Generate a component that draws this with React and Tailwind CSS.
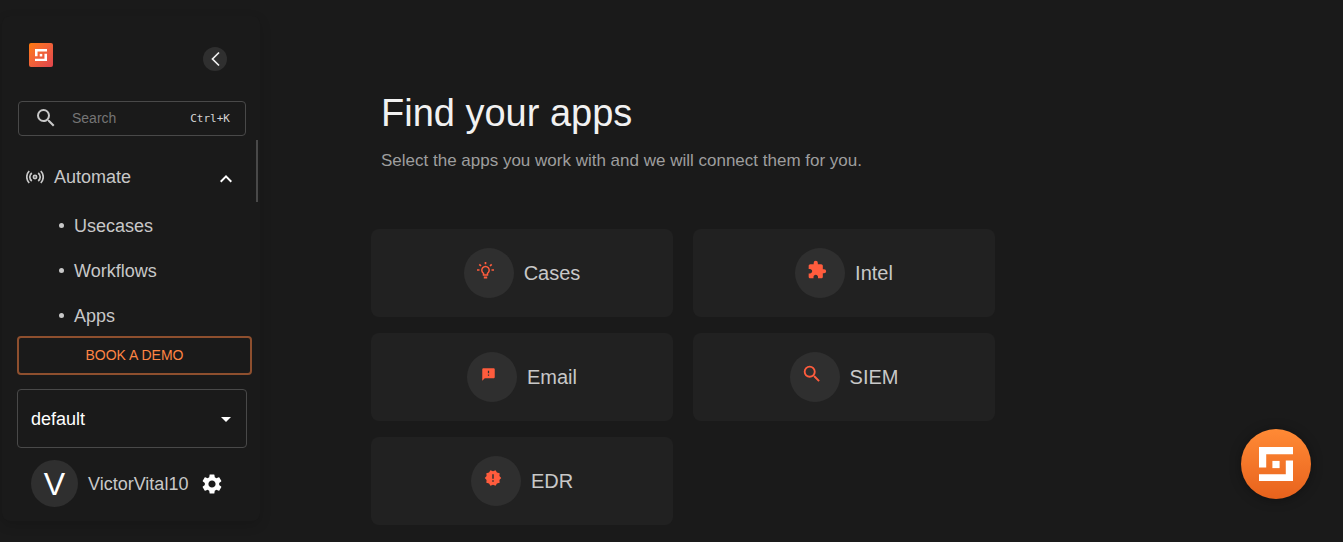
import React from "react";
import {
  MdSearch,
  MdSettings,
  MdExtension,
  MdSmsFailed,
  MdNewReleases,
  MdExpandLess,
  MdArrowDropDown,
} from "react-icons/md";

function Mark({ className }) {
  return (
    <svg viewBox="0 0 33 33" className={className} fill="#fff" aria-hidden="true">
      <path d="M0 0H33V7H7V20H0Z" />
      <path d="M33 33H0V26.500H26V13H33Z" />
      <path d="M13 13.500H20V20.500H13Z" />
    </svg>
  );
}

function BulbIcon({ className }) {
  return (
    <svg viewBox="0 0 17 17" className={className} fill="none" stroke="currentColor" strokeWidth="1.500" aria-hidden="true">
      <path d="M6.500 13V11.300A3.700 3.700 0 1 1 10.500 11.300V13Z" />
      <path d="M6.800 15.500H10.200" strokeWidth="2" />
      <path d="M8.500 0V2.300M0 8H2.500M14.500 8H17M2.300 2.300L4 4M14.700 2.300L13 4" strokeWidth="1.700" />
    </svg>
  );
}

function SignalIcon({ className }) {
  return (
    <svg viewBox="0 0 18 14" className={className} fill="none" stroke="currentColor" strokeWidth="1.700" aria-hidden="true">
      <circle cx="9" cy="7" r="1.600" />
      <path d="M5.800 3A5 5 0 0 0 5.800 11M12.200 3A5 5 0 0 1 12.200 11M3.200 1A8.600 8.600 0 0 0 3.200 13M14.800 1A8.600 8.600 0 0 1 14.800 13" />
    </svg>
  );
}

const apps = [
  { name: "Cases", Icon: BulbIcon, size: "size-[17px]" },
  { name: "Intel", Icon: MdExtension, size: "size-5" },
  { name: "Email", Icon: MdSmsFailed, size: "size-[15px]" },
  { name: "SIEM", Icon: MdSearch, size: "size-[22px]" },
  { name: "EDR", Icon: MdNewReleases, size: "size-[18px]" },
];

function Sidebar() {
  return (
    <aside className="mt-4 ml-0.5 flex w-[258px] shrink-0 flex-col self-start rounded-lg bg-[#1a1a1a] pb-3.5 shadow-[0_4px_12px_rgba(0,0,0,0.15)]">
      <div className="flex justify-between pt-[27px] pr-[33px] pl-[27px]">
        <a href="#home" aria-label="Home" className="flex size-6 items-center justify-center rounded-xs bg-linear-to-br from-[#ff7a00] to-[#e0444c]">
          <Mark className="size-3" />
        </a>
        <button aria-label="Collapse sidebar" className="mt-1 flex size-6 items-center justify-center rounded-full bg-[#2f2f2f]">
          <svg viewBox="0 0 10 16" className="h-4 w-2.5" fill="none" stroke="#f1f1f1" strokeWidth="1.700" aria-hidden="true">
            <path d="M9 1.500L2.500 8L9 14.500" />
          </svg>
        </button>
      </div>

      <label className="mt-[30px] mr-3.5 ml-4 flex h-[35px] items-center rounded-sm border border-[#494949] pr-[15px] pb-0.5 pl-[15px] focus-within:border-[#ff8544]">
        <MdSearch className="size-6 shrink-0 text-[#c8c8c8]" />
        <input type="text" aria-label="Search" placeholder="Search" className="ml-3.5 w-0 min-w-0 flex-1 text-sm text-[#c8c8c8] outline-none placeholder:text-[#757575]" />
        <kbd className="pt-1 font-['DejaVu_Sans_Mono',monospace] text-[11px] text-[#d4d4d4]">Ctrl+K</kbd>
      </label>

      <nav className="mt-1 mr-0.5 flex h-[196px]">
        <div className="flex-1 overflow-hidden pt-4">
          <button className="flex h-[42px] w-full items-center pr-[18px] pl-6 text-lg text-[#c8c8c8]">
            <SignalIcon className="h-3.5 w-[18px]" />
            <span className="ml-2.5">Automate</span>
            <MdExpandLess className="mt-1 ml-auto size-6 text-white" />
          </button>
          <ul className="mt-[5px] text-lg text-[#c8c8c8]">
            {["Usecases", "Workflows", "Apps"].map((name) => (
              <li key={name}>
                <a href={"#" + name.toLowerCase()} className="flex h-[45px] items-center gap-2.5 pl-[57px]">
                  <span className="size-[5px] rounded-full bg-[#c8c8c8]" />
                  {name}
                </a>
              </li>
            ))}
          </ul>
        </div>
        <div className="h-[62px] w-0.5 bg-[#494949]" />
      </nav>

      <button className="mr-2 ml-[15px] h-[39px] rounded-sm border-2 border-[#8e4f2e] pb-0.5 text-sm text-[#ff8544]">
        BOOK A DEMO
      </button>

      <div className="mt-3.5 mr-[13px] ml-[15px] grid items-center">
        <select aria-label="Organization" className="col-start-1 row-start-1 h-[59px] appearance-none rounded-sm border border-[#494949] bg-[#1a1a1a] pr-10 pl-[13px] text-lg text-white">
          <option>default</option>
        </select>
        <MdArrowDropDown className="pointer-events-none col-start-1 row-start-1 mr-[9px] size-6 justify-self-end text-white" />
      </div>

      <div className="mt-3 flex items-center pl-[29px]">
        <span className="flex size-[47px] items-center justify-center rounded-full bg-[#2f2f2f] text-[32px] leading-9 text-white">V</span>
        <span className="ml-2.5 text-lg text-[#c8c8c8]">VictorVital10</span>
        <button aria-label="Settings" className="ml-3">
          <MdSettings className="size-6 text-white" />
        </button>
      </div>
    </aside>
  );
}

function AppCard({ name, Icon, size }) {
  return (
    <button className="flex h-[88px] items-center justify-center gap-2.5 rounded-lg bg-[#212121] text-xl text-[#c8c8c8]">
      <span className="flex size-[50px] items-center justify-center rounded-full bg-[#2f2f2f] pr-1.5 pb-1.5 text-[#ff5c3d]">
        <Icon className={size} />
      </span>
      {name}
    </button>
  );
}

export default function App() {
  return (
    <div className="flex min-h-screen bg-[#1a1a1a] font-['Liberation_Sans',Arial,sans-serif]">
      <Sidebar />
      <main className="ml-[111px] w-full max-w-[624px] pt-[88px] pb-4">
        <h1 className="pl-2.5 text-[38px] leading-[50px] text-[#f1f1f1]">Find your apps</h1>
        <p className="mt-[9px] pl-2.5 text-[17px] leading-7 text-[#9e9e9e]">
          Select the apps you work with and we will connect them for you.
        </p>
        <div className="mt-[54px] grid grid-cols-2 gap-x-5 gap-y-4">
          {apps.map((app) => (
            <AppCard key={app.name} {...app} />
          ))}
        </div>
      </main>
      <button aria-label="Open support chat" className="fixed right-8 bottom-[43px] flex size-[70px] items-center justify-center rounded-full bg-linear-to-b from-[#ff8a35] to-[#e8621c] shadow-[0_1px_12px_rgba(0,0,0,0.35)]">
        <Mark className="size-[34px]" />
      </button>
    </div>
  );
}
